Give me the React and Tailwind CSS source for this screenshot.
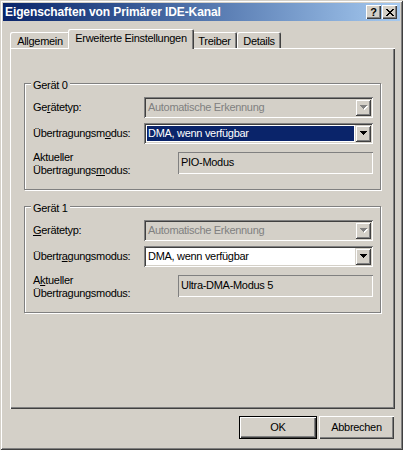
import React from 'react';

const font = "font-['Liberation_Sans',Arial,sans-serif]";
const pushBtn = 'shadow-[inset_1px_1px_#ffffff,inset_-1px_-1px_#404040,inset_-2px_-2px_#808080]';
const edgeRaised = 'shadow-[inset_1px_1px_#d4d0c8,inset_-1px_-1px_#404040,inset_2px_2px_#ffffff,inset_-2px_-2px_#808080]';
const sunken = 'shadow-[inset_1px_1px_#808080,inset_-1px_-1px_#ffffff,inset_2px_2px_#404040,inset_-2px_-2px_#d4d0c8]';
const thinSunken = 'shadow-[inset_1px_1px_#808080,inset_-1px_-1px_#ffffff]';

function Arrow({ disabled }) {
  const c = disabled ? '#808080' : '#000000';
  return (
    <svg width="8" height="5" viewBox="0 0 8 5" shapeRendering="crispEdges">
      {disabled && (
        <g fill="#ffffff">
          <rect x="1" y="1" width="7" height="1" />
          <rect x="2" y="2" width="5" height="1" />
          <rect x="3" y="3" width="3" height="1" />
          <rect x="4" y="4" width="1" height="1" />
        </g>
      )}
      <g fill={c}>
        <rect x="0" y="0" width="7" height="1" />
        <rect x="1" y="1" width="5" height="1" />
        <rect x="2" y="2" width="3" height="1" />
        <rect x="3" y="3" width="1" height="1" />
      </g>
    </svg>
  );
}

function Combo({ value, disabled, selected }) {
  return (
    <div className={`flex-1 h-[21px] flex p-[2px] ${sunken} ${disabled ? 'bg-[#d4d0c8]' : 'bg-white'}`}>
      <div className="flex-1 min-w-0 p-[1px] flex">
        <div
          className={`flex-1 flex items-center pl-[1px] whitespace-nowrap ${
            selected ? 'bg-[#0a246a] text-white' : disabled ? 'text-[#808080]' : 'text-black'
          }`}
        >
          {value}
        </div>
      </div>
      <div className={`w-[16px] flex items-center justify-center pl-[1px] bg-[#d4d0c8] ${edgeRaised}`}>
        <Arrow disabled={disabled} />
      </div>
    </div>
  );
}

function Group({ title, children }) {
  return (
    <div className="relative border border-[#808080] shadow-[1px_1px_0_#ffffff,inset_1px_1px_0_#ffffff] pl-[8px] pr-[7px] pt-[13px] pb-[12px]">
      <div className="absolute top-[-5px] left-[6px] px-[2px] bg-[#d4d0c8] leading-[13px]">{title}</div>
      {children}
    </div>
  );
}

function Device({ typeLabel, modeLabel, currentLabel, mode, selected, current }) {
  return (
    <>
      <div className="flex items-center h-[21px]">
        <div className="w-[111px] leading-[13px]">{typeLabel}</div>
        <Combo value="Automatische Erkennung" disabled />
      </div>
      <div className="flex items-center h-[21px] mt-[5px]">
        <div className="w-[111px] leading-[13px]">{modeLabel}</div>
        <Combo value={mode} selected={selected} />
      </div>
      <div className="flex items-center mt-[4px]">
        <div className="w-[145px] leading-[13px] pt-[3px]">{currentLabel}</div>
        <div className={`flex-1 h-[22px] flex items-center pl-[3px] ${thinSunken}`}>{current}</div>
      </div>
    </>
  );
}

const tabs = [
  { label: 'Allgemein', w: 'w-[60px]' },
  { label: 'Erweiterte Einstellungen', w: 'w-[126px]', active: true },
  { label: 'Treiber', w: 'w-[45px]' },
  { label: 'Details', w: 'w-[44px]' },
];

export default function App() {
  return (
    <div
      className={`${font} text-[11px] tracking-[-0.3px] text-black w-[403px] h-[450px] bg-[#d4d0c8] p-[3px] flex flex-col ${edgeRaised}`}
    >
      {/* Title bar */}
      <div className="h-[18px] flex items-center justify-between pl-[2px] pr-[3px] bg-linear-to-r from-[#0a246a] to-[#a6caf0]">
        <span className="text-white font-bold text-[12px] tracking-[-0.1px] leading-[14px]">
          Eigenschaften von Primärer IDE-Kanal
        </span>
        <div className="flex gap-[1px]">
          <div className={`w-[15px] h-[14px] bg-[#d4d0c8] flex items-center justify-center font-bold text-[11px] leading-none ${pushBtn}`}>
            ?
          </div>
          <div className={`w-[15px] h-[14px] bg-[#d4d0c8] flex items-center justify-center ${pushBtn}`}>
            <svg width="8" height="7" viewBox="0 0 8 7" shapeRendering="crispEdges" fill="#000">
              <rect x="0" y="0" width="2" height="1" /><rect x="6" y="0" width="2" height="1" />
              <rect x="1" y="1" width="2" height="1" /><rect x="5" y="1" width="2" height="1" />
              <rect x="2" y="2" width="4" height="1" />
              <rect x="3" y="3" width="2" height="1" />
              <rect x="2" y="4" width="4" height="1" />
              <rect x="1" y="5" width="2" height="1" /><rect x="5" y="5" width="2" height="1" />
              <rect x="0" y="6" width="2" height="1" /><rect x="6" y="6" width="2" height="1" />
            </svg>
          </div>
        </div>
      </div>

      <div className="flex-1 flex flex-col pl-[7px] pr-[5px] pt-[8px] pb-[8px]">
        {/* Tabs */}
        <div className="h-[19px] flex items-end relative z-10">
          {tabs.map((t) =>
            t.active ? (
              <div
                key={t.label}
                className={`${t.w} h-[20px] mb-[-1px] mx-[-2px] relative z-10 bg-[#d4d0c8] rounded-t-[2px] flex items-center justify-center pb-[1px] shadow-[inset_1px_1px_#ffffff,inset_-1px_0_#404040,inset_-2px_0_#808080]`}
              >
                {t.label}
              </div>
            ) : (
              <div
                key={t.label}
                className={`${t.w} h-[16px] bg-[#d4d0c8] rounded-t-[2px] flex items-center justify-center pt-[2px] shadow-[inset_1px_1px_#ffffff,inset_-1px_0_#404040,inset_-2px_0_#808080]`}
              >
                {t.label}
              </div>
            )
          )}
        </div>

        {/* Panel */}
        <div className="h-[361px] px-[14px] pt-[35px] shadow-[inset_1px_1px_#ffffff,inset_-1px_-1px_#404040,inset_-2px_-2px_#808080]">
          <Group title="Gerät 0">
            <Device
              typeLabel={<>Ge<u className="underline-offset-[1px]">r</u>ätetyp:</>}
              modeLabel={<>Übertragungsm<u className="underline-offset-[1px]">o</u>dus:</>}
              currentLabel={<>Aktueller<br />Übertragungs<u className="underline-offset-[1px]">m</u>odus:</>}
              mode="DMA, wenn verfügbar"
              selected
              current="PIO-Modus"
            />
          </Group>
          <div className="mt-[16px]">
            <Group title="Gerät 1">
              <Device
                typeLabel={<><u className="underline-offset-[1px]">G</u>erätetyp:</>}
                modeLabel={<>Übertr<u className="underline-offset-[1px]">a</u>gungsmodus:</>}
                currentLabel={<>A<u className="underline-offset-[1px]">k</u>tueller<br />Übertragungsmodus:</>}
                mode="DMA, wenn verfügbar"
                current="Ultra-DMA-Modus 5"
              />
            </Group>
          </div>
        </div>

        {/* Buttons */}
        <div className="mt-[7px] flex justify-end gap-[2px] pr-[1px]">
          <div className="w-[78px] h-[23px] border border-black">
            <div className={`w-full h-full flex items-center justify-center ${pushBtn}`}>OK</div>
          </div>
          <div className={`w-[75px] h-[23px] flex items-center justify-center ${pushBtn}`}>Abbrechen</div>
        </div>
      </div>
    </div>
  );
}
